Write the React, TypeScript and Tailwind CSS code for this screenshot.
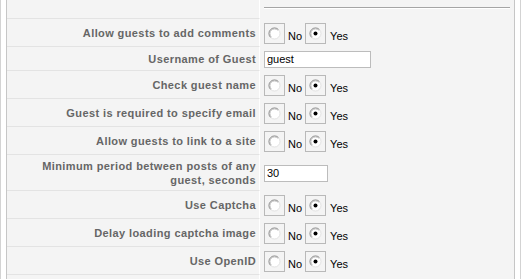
import React from "react";

type Row =
  | { kind: "radio"; label: string }
  | { kind: "text"; label: string; value: string; width: string; tall?: boolean };

const rows: Row[] = [
  { kind: "radio", label: "Allow guests to add comments" },
  { kind: "text", label: "Username of Guest", value: "guest", width: "w-[107px]" },
  { kind: "radio", label: "Check guest name" },
  { kind: "radio", label: "Guest is required to specify email" },
  { kind: "radio", label: "Allow guests to link to a site" },
  {
    kind: "text",
    label: "Minimum period between posts of any guest, seconds",
    value: "30",
    width: "w-[64px]",
    tall: true,
  },
  { kind: "radio", label: "Use Captcha" },
  { kind: "radio", label: "Delay loading captcha image" },
  { kind: "radio", label: "Use OpenID" },
];

const RadioDot = ({ checked }: { checked?: boolean }) => (
  <svg width="13" height="13" viewBox="0 0 13 13" className="block">
    <circle cx="6.5" cy="6.5" r="5.5" fill="#fff" stroke="#e2e2e2" strokeWidth="1" />
    {/* darker top-left half of the ring */}
    <path d="M2.6 10.4 A5.5 5.5 0 0 1 10.4 2.6" fill="none" stroke="#8a8a8a" strokeWidth="1" />
    <path d="M3.3 9.7 A4.5 4.5 0 0 1 9.7 3.3" fill="none" stroke="#c4c4c4" strokeWidth="1" />
    {checked && <circle cx="6.5" cy="6.5" r="2" fill="#000" />}
  </svg>
);

const RadioBox = ({ checked }: { checked?: boolean }) => (
  <span className="block border border-[#b9b9b9] p-[3px]">
    <RadioDot checked={checked} />
  </span>
);

const YesNo = () => (
  <div className="flex items-start pt-[4px]">
    <RadioBox />
    <span className="ml-[3px] mr-[3px] mt-[7px] text-[11px] leading-[13px] text-black">No</span>
    <RadioBox checked />
    <span className="ml-[4px] mt-[7px] text-[11px] leading-[13px] text-black">Yes</span>
  </div>
);

export default function App() {
  return (
    <div className="w-[522px] h-[279px] overflow-hidden bg-white font-['Liberation_Sans',Arial,sans-serif]">
      <div className="w-[521px] h-full border-x border-[#d3d3d3] px-[5px]">
        <div className="flex h-full flex-col border-x border-[#c6c6c6] bg-[#f4f4f4]">
          {/* top row with divider */}
          <div className="flex h-[19px] shrink-0">
            <div className="w-[253px] border-b border-r border-b-[#e3e3e3] border-r-white" />
            <div className="flex-1 px-[4px] pt-[7px]">
              <div className="border-t border-b border-t-[#a5a5a5] border-b-white" />
            </div>
          </div>

          {rows.map((row) => {
            const h =
              row.kind === "radio" ? "h-[28px]" : row.tall ? "h-[36px]" : "h-[24px]";
            return (
              <div key={row.label} className={`flex shrink-0 ${h}`}>
                <div className="flex w-[253px] items-center justify-end border-b border-r border-b-[#e3e3e3] border-r-white pl-[8px] pr-[3px] text-right text-[11px] font-bold leading-[14px] tracking-[0.4px] text-[#666]">
                  {row.label}
                </div>
                <div className="flex-1 pl-[4px]">
                  {row.kind === "radio" ? (
                    <YesNo />
                  ) : (
                    <div className="flex h-full items-center">
                      <input
                        defaultValue={row.value}
                        className={`${row.width} h-[17px] border border-[#bcbcbc] bg-white px-[2px] text-[11px] text-black outline-none`}
                      />
                    </div>
                  )}
                </div>
              </div>
            );
          })}

          <div className="flex flex-1">
            <div className="w-[253px] border-r border-white" />
            <div className="flex-1" />
          </div>
        </div>
      </div>
    </div>
  );
}
